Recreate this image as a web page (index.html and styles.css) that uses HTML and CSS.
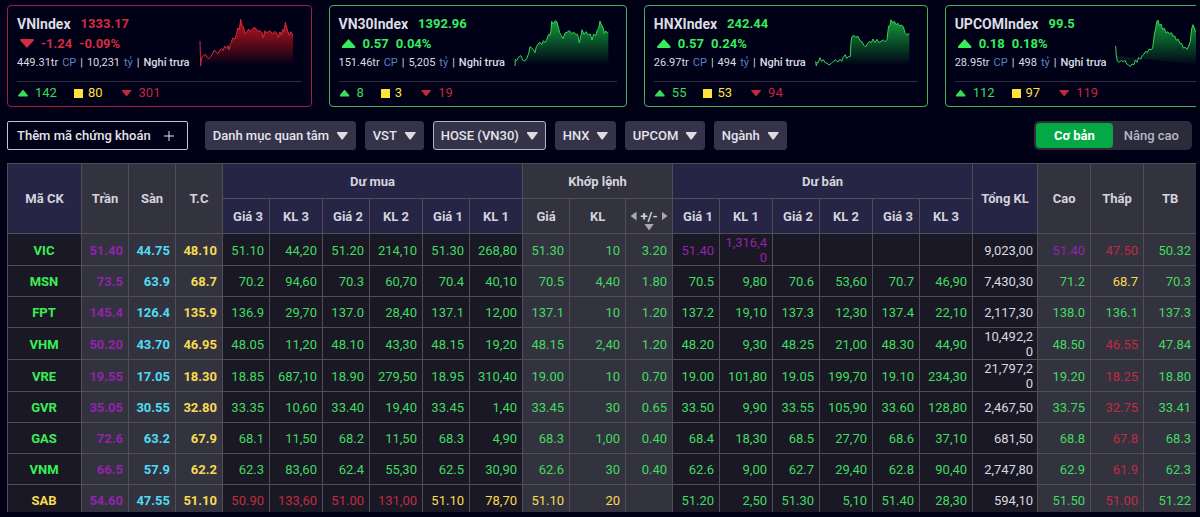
FILE: index.html
```html
<!DOCTYPE html>
<html lang="vi">
<head>
<meta charset="utf-8">
<title>Bảng giá HOSE (VN30)</title>
<link rel="stylesheet" href="styles.css">
</head>
<body>
<main class="board">
<section class="indices">
  <article class="card down">
    <div class="summary">
      <div class="info">
        <h2 class="name">VNIndex <span class="value">1333.17</span></h2>
        <p class="change"><i class="tri"></i><span>-1.24</span><span>-0.09%</span></p>
        <p class="volume"><span>449.31tr</span><span class="unit">CP</span><span>|</span><span>10,231</span><span class="unit">tỷ</span><span>|</span><span class="state">Nghỉ trưa</span></p>
      </div>
      <svg class="chart" viewBox="597 54 285 150">
        <defs><linearGradient id="fallFill" x1="0" y1="0" x2="0" y2="1"><stop offset="0" stop-color="#c4161f"/><stop offset="1" stop-color="#c4161f" stop-opacity="0"/></linearGradient></defs>
        <path fill="url(#fallFill)" d="M601 196L601 172 604 176 608 168 613 163 618 165 621 172 627 176 632 170 638 160 643 150 648 156 654 161 660 150 665 146 669 152 674 138 679 145 684 137 687 150 691 134 694 128 698 114 705 117 710 100 713 84 718 88 722 58 726 76 731 82 735 102 740 96 746 87 751 94 757 88 762 82 768 86 773 94 780 92 786 98 790 114 795 92 800 100 806 93 812 94 818 102 824 94 830 99 835 112 840 96 844 106 848 88 852 94 856 67 860 82 864 96 868 106 873 95 879 108V196Z"/>
        <path class="line" d="M600 123L602 198 604 176 608 168 613 163 618 165 621 172 627 176 632 170 638 160 643 150 648 156 654 161 660 150 665 146 669 152 674 138 679 145 684 137 687 150 691 134 694 128 698 114 705 117 710 100 713 84 718 88 722 58 726 76 731 82 735 102 740 96 746 87 751 94 757 88 762 82 768 86 773 94 780 92 786 98 790 114 795 92 800 100 806 93 812 94 818 102 824 94 830 99 835 112 840 96 844 106 848 88 852 94 856 67 860 82 864 96 868 106 873 95 879 108"/>
      </svg>
    </div>
    <div class="counts"><span class="up"><i class="tri"></i>142</span><span class="flat"><i></i>80</span><span class="down"><i class="tri"></i>301</span></div>
  </article>
  <article class="card up">
    <div class="summary">
      <div class="info">
        <h2 class="name">VN30Index <span class="value">1392.96</span></h2>
        <p class="change"><i class="tri"></i><span>0.57</span><span>0.04%</span></p>
        <p class="volume"><span>151.46tr</span><span class="unit">CP</span><span>|</span><span>5,205</span><span class="unit">tỷ</span><span>|</span><span class="state">Nghỉ trưa</span></p>
      </div>
      <svg class="chart" viewBox="582 54 285 150">
        <defs><linearGradient id="riseFill" x1="0" y1="0" x2="0" y2="1"><stop offset="0" stop-color="#14993a"/><stop offset="1" stop-color="#14993a" stop-opacity="0"/></linearGradient></defs>
        <path fill="url(#riseFill)" d="M586 196V178L590 182 594 174 600 167 604 169 608 180 614 183 620 176 626 160 630 140 635 144 640 149 645 158 649 140 654 132 660 127 665 134 670 122 675 128 681 117 686 103 690 106 693 92 695 64 700 72 705 63 710 64 714 78 719 98 724 106 729 116 735 99 741 97 748 92 755 101 761 97 767 102 773 104 778 128 783 106 786 89 792 103 798 95 804 104 811 102 816 120 821 102 827 108 832 89 836 85 840 63 844 74 849 82 853 100 857 93 862 98 865 96V196Z"/>
        <path class="line" d="M585 198L586 178 590 182 594 174 600 167 604 169 608 180 614 183 620 176 626 160 630 140 635 144 640 149 645 158 649 140 654 132 660 127 665 134 670 122 675 128 681 117 686 103 690 106 693 92 695 64 700 72 705 63 710 64 714 78 719 98 724 106 729 116 735 99 741 97 748 92 755 101 761 97 767 102 773 104 778 128 783 106 786 89 792 103 798 95 804 104 811 102 816 120 821 102 827 108 832 89 836 85 840 63 844 74 849 82 853 100 857 93 862 98 865 96"/>
      </svg>
    </div>
    <div class="counts"><span class="up"><i class="tri"></i>8</span><span class="flat"><i></i>3</span><span class="down"><i class="tri"></i>19</span></div>
  </article>
  <article class="card up">
    <div class="summary">
      <div class="info">
        <h2 class="name">HNXIndex <span class="value">242.44</span></h2>
        <p class="change"><i class="tri"></i><span>0.57</span><span>0.24%</span></p>
        <p class="volume"><span>26.97tr</span><span class="unit">CP</span><span>|</span><span>494</span><span class="unit">tỷ</span><span>|</span><span class="state">Nghỉ trưa</span></p>
      </div>
      <svg class="chart" viewBox="525 54 285 150">
        <path fill="url(#riseFill)" d="M529 198L532 186 535 188 540 173 545 184 550 179 555 188 561 189 567 195 574 190 580 184 587 180 594 186 600 178 605 184 610 172 616 164 620 175 626 170 631 169 633 126 636 110 642 106 647 112 654 109 660 122 666 126 672 136 677 141 683 130 688 124 694 128 699 117 705 128 711 118 717 128 724 123 730 120 736 125 741 119 743 100 746 78 751 75 753 59 758 68 763 64 768 74 774 70 779 78 785 75 790 80 795 98 800 104 808 101V198Z"/>
        <path class="line" d="M527 184L529 198 532 186 535 188 540 173 545 184 550 179 555 188 561 189 567 195 574 190 580 184 587 180 594 186 600 178 605 184 610 172 616 164 620 175 626 170 631 169 633 126 636 110 642 106 647 112 654 109 660 122 666 126 672 136 677 141 683 130 688 124 694 128 699 117 705 128 711 118 717 128 724 123 730 120 736 125 741 119 743 100 746 78 751 75 753 59 758 68 763 64 768 74 774 70 779 78 785 75 790 80 795 98 800 104 808 101"/>
      </svg>
    </div>
    <div class="counts"><span class="up"><i class="tri"></i>55</span><span class="flat"><i></i>53</span><span class="down"><i class="tri"></i>94</span></div>
  </article>
  <article class="card up">
    <div class="summary">
      <div class="info">
        <h2 class="name">UPCOMIndex <span class="value">99.5</span></h2>
        <p class="change"><i class="tri"></i><span>0.18</span><span>0.18%</span></p>
        <p class="volume"><span>28.95tr</span><span class="unit">CP</span><span>|</span><span>498</span><span class="unit">tỷ</span><span>|</span><span class="state">Nghỉ trưa</span></p>
      </div>
      <svg class="chart" viewBox="560 54 285 150">
        <path fill="url(#riseFill)" d="M563 168L567 183 573 187 579 181 585 186 590 181 595 192 600 194 605 200 611 192 617 194 621 180 626 187 631 172 637 178 641 168 647 162 652 154 657 158 662 148 668 149 673 145 676 120 679 98 682 86 685 66 689 60 693 76 698 72 703 88 708 85 713 99 718 95 723 102 729 98 734 108 740 109 744 121 750 118 755 131 760 130 765 144 771 142 776 148 781 138 786 124 790 86 794 74 800 90 806 102 812 96 820 108 828 104 842 110V198Z"/>
        <path class="line" d="M562 138L564 168 567 183 573 187 579 181 585 186 590 181 595 192 600 194 605 200 611 192 617 194 621 180 626 187 631 172 637 178 641 168 647 162 652 154 657 158 662 148 668 149 673 145 676 120 679 98 682 86 685 66 689 60 693 76 698 72 703 88 708 85 713 99 718 95 723 102 729 98 734 108 740 109 744 121 750 118 755 131 760 130 765 144 771 142 776 148 781 138 786 124 790 86 794 74 800 90 806 102 812 96 820 108 828 104 842 110"/>
      </svg>
    </div>
    <div class="counts"><span class="up"><i class="tri"></i>112</span><span class="flat"><i></i>97</span><span class="down"><i class="tri"></i>119</span></div>
  </article>
</section>

<nav class="toolbar">
  <button class="add" type="button">Thêm mã chứng khoán
    <svg viewBox="0 0 10 10" width="10" height="10"><path d="M5 0V10M0 5H10" stroke="#e4e4ea" fill="none"/></svg>
  </button>
  <label class="drop"><select aria-label="Danh mục"><option>Danh mục quan tâm</option></select></label>
  <label class="drop"><select aria-label="VST"><option>VST</option></select></label>
  <label class="drop selected"><select aria-label="HOSE"><option>HOSE (VN30)</option></select></label>
  <label class="drop"><select aria-label="HNX"><option>HNX</option></select></label>
  <label class="drop"><select aria-label="UPCOM"><option>UPCOM</option></select></label>
  <label class="drop"><select aria-label="Ngành"><option>Ngành</option></select></label>
  <div class="mode">
    <button type="button" class="active" aria-pressed="true">Cơ bản</button>
    <button type="button" aria-pressed="false">Nâng cao</button>
  </div>
</nav>

<section class="quotes">
<table>
  <colgroup>
    <col class="code"><col class="price alt"><col class="price alt"><col class="price alt">
    <col class="price"><col class="lot"><col class="price"><col class="lot"><col class="price"><col class="lot">
    <col class="price alt"><col class="match alt"><col class="price alt">
    <col class="price"><col class="lot"><col class="price"><col class="lot"><col class="price"><col class="lot">
    <col class="total"><col class="lot alt"><col class="lot alt"><col class="lot alt">
  </colgroup>
  <thead>
    <tr>
      <th rowspan="2">Mã CK</th><th rowspan="2" class="alt">Trần</th><th rowspan="2" class="alt">Sàn</th><th rowspan="2" class="alt">T.C</th>
      <th colspan="6">Dư mua</th><th colspan="3" class="alt">Khớp lệnh</th><th colspan="6">Dư bán</th>
      <th rowspan="2">Tổng KL</th><th rowspan="2" class="alt">Cao</th><th rowspan="2" class="alt">Thấp</th><th rowspan="2" class="alt">TB</th>
    </tr>
    <tr>
      <th class="lead">Giá 3</th><th>KL 3</th><th class="lead">Giá 2</th><th>KL 2</th><th class="lead">Giá 1</th><th>KL 1</th>
      <th class="alt">Giá</th><th class="alt">KL</th><th class="alt"><span class="pager"><i class="prev"></i>+/-<i class="next"></i><i class="more"></i></span></th>
      <th class="lead">Giá 1</th><th>KL 1</th><th class="lead">Giá 2</th><th>KL 2</th><th class="lead">Giá 3</th><th>KL 3</th>
    </tr>
  </thead>
  <tbody>
    <tr><td>VIC</td><td>51.40</td><td>44.75</td><td>48.10</td><td>51.10</td><td>44,20</td><td>51.20</td><td>214,10</td><td>51.30</td><td>268,80</td><td>51.30</td><td>10</td><td>3.20</td><td class="ceil">51.40</td><td class="ceil">1,316,40</td><td></td><td></td><td></td><td></td><td>9,023,00</td><td class="ceil">51.40</td><td class="loss">47.50</td><td>50.32</td></tr>
    <tr><td>MSN</td><td>73.5</td><td>63.9</td><td>68.7</td><td>70.2</td><td>94,60</td><td>70.3</td><td>60,70</td><td>70.4</td><td>40,10</td><td>70.5</td><td>4,40</td><td>1.80</td><td>70.5</td><td>9,80</td><td>70.6</td><td>53,60</td><td>70.7</td><td>46,90</td><td>7,430,30</td><td>71.2</td><td class="ref">68.7</td><td>70.3</td></tr>
    <tr><td>FPT</td><td>145.4</td><td>126.4</td><td>135.9</td><td>136.9</td><td>29,70</td><td>137.0</td><td>28,40</td><td>137.1</td><td>12,00</td><td>137.1</td><td>10</td><td>1.20</td><td>137.2</td><td>19,10</td><td>137.3</td><td>12,30</td><td>137.4</td><td>22,10</td><td>2,117,30</td><td>138.0</td><td>136.1</td><td>137.3</td></tr>
    <tr><td>VHM</td><td>50.20</td><td>43.70</td><td>46.95</td><td>48.05</td><td>11,20</td><td>48.10</td><td>43,30</td><td>48.15</td><td>19,20</td><td>48.15</td><td>2,40</td><td>1.20</td><td>48.20</td><td>9,30</td><td>48.25</td><td>21,00</td><td>48.30</td><td>44,90</td><td>10,492,20</td><td>48.50</td><td class="loss">46.55</td><td>47.84</td></tr>
    <tr><td>VRE</td><td>19.55</td><td>17.05</td><td>18.30</td><td>18.85</td><td>687,10</td><td>18.90</td><td>279,50</td><td>18.95</td><td>310,40</td><td>19.00</td><td>10</td><td>0.70</td><td>19.00</td><td>101,80</td><td>19.05</td><td>199,70</td><td>19.10</td><td>234,30</td><td>21,797,20</td><td>19.20</td><td class="loss">18.25</td><td>18.80</td></tr>
    <tr><td>GVR</td><td>35.05</td><td>30.55</td><td>32.80</td><td>33.35</td><td>10,60</td><td>33.40</td><td>19,40</td><td>33.45</td><td>1,40</td><td>33.45</td><td>30</td><td>0.65</td><td>33.50</td><td>9,90</td><td>33.55</td><td>105,90</td><td>33.60</td><td>128,80</td><td>2,467,50</td><td>33.75</td><td class="loss">32.75</td><td>33.41</td></tr>
    <tr><td>GAS</td><td>72.6</td><td>63.2</td><td>67.9</td><td>68.1</td><td>11,50</td><td>68.2</td><td>11,50</td><td>68.3</td><td>4,90</td><td>68.3</td><td>1,00</td><td>0.40</td><td>68.4</td><td>18,30</td><td>68.5</td><td>27,70</td><td>68.6</td><td>37,10</td><td>681,50</td><td>68.8</td><td class="loss">67.8</td><td>68.3</td></tr>
    <tr><td>VNM</td><td>66.5</td><td>57.9</td><td>62.2</td><td>62.3</td><td>83,60</td><td>62.4</td><td>55,30</td><td>62.5</td><td>30,90</td><td>62.6</td><td>30</td><td>0.40</td><td>62.6</td><td>9,00</td><td>62.7</td><td>29,40</td><td>62.8</td><td>90,40</td><td>2,747,80</td><td>62.9</td><td class="loss">61.9</td><td>62.3</td></tr>
    <tr><td class="ref">SAB</td><td>54.60</td><td>47.55</td><td>51.10</td><td class="loss">50.90</td><td class="loss">133,60</td><td class="loss">51.00</td><td class="loss">131,00</td><td class="ref">51.10</td><td class="ref">78,70</td><td class="ref">51.10</td><td class="ref">20</td><td></td><td>51.20</td><td>2,50</td><td>51.30</td><td>5,10</td><td>51.40</td><td>28,30</td><td>594,10</td><td>51.50</td><td class="loss">51.00</td><td>51.22</td></tr>
  </tbody>
</table>
</section>
</main>
</body>
</html>
```
FILE: styles.css
```css
* { box-sizing: border-box; }

body {
  margin: 0;
  background: #000016;
  color: #dcdce2;
  font-family: Roboto, "Noto Sans", sans-serif;
  font-size: 13px;
}

.board {
  display: flex;
  flex-direction: column;
  height: 100vh;
  padding: 5px 4px 5px 7px;
}

/* Index cards */
.indices {
  display: flex;
  gap: 17px;
  overflow: hidden;
  flex: none;
}

.card {
  flex: none;
  padding: 8px 9px 2px;
  border: 1px solid;
  border-radius: 4px;
}
.card.down { border-color: #a02040; }
.card.up { border-color: #48b05c; }

.summary {
  display: flex;
  gap: 9px;
  padding: 0 8px 9px 0;
  border-bottom: 1px solid #2e2d44;
}

.name, .change, .volume {
  display: flex;
  align-items: center;
  margin: 0;
  white-space: nowrap;
}
.name { gap: 10px; font-size: 14px; font-weight: 700; line-height: 20px; }
.value { font-size: 13px; }
.change { gap: 7px; padding-left: 3px; font-size: 13px; font-weight: 700; line-height: 19px; }
.volume { gap: 4px; font-size: 11px; line-height: 19px; }
.unit { color: #5a82c8; }
.state { font-weight: 500; }

.card.up .value, .card.up .change { color: #38ec5c; }
.card.down .value, .card.down .change { color: #d42c40; }

.chart { flex: none; width: 95px; height: 50px; margin-top: 4px; }
.line { fill: none; stroke: #34d458; stroke-width: 3; stroke-linejoin: round; }
.card.down .line { stroke: #d02c3c; }

.tri { display: inline-block; background: currentColor; clip-path: polygon(50% 0, 100% 85%, 95% 100%, 5% 100%, 0 85%); }
.down > .tri, .card.down .change .tri { clip-path: polygon(5% 0, 95% 0, 100% 15%, 50% 100%, 0 15%); }
.change .tri { width: 14px; height: 9px; }

.counts { display: flex; gap: 17px; padding-left: 1px; font-size: 13px; line-height: 22px; }
.counts span { display: flex; align-items: center; gap: 7px; }
.counts .tri { width: 10px; height: 7px; }
.counts .up { color: #38dc58; }
.counts .flat { gap: 5px; margin-right: 2px; color: #ffe23c; }
.counts .flat i { width: 9px; height: 9px; background: currentColor; }
.counts .down { color: #c02840; }

/* Toolbar */
.toolbar {
  display: flex;
  flex: none;
  gap: 9px;
  margin: 14px 4px 13px 0;
}
.toolbar button, .toolbar select {
  color: #e4e4ea;
  font: 500 13px/26px Roboto, "Noto Sans", sans-serif;
  cursor: pointer;
}
.add {
  display: flex;
  align-items: center;
  gap: 13px;
  height: 29px;
  margin-right: 8px;
  padding: 0 13px 0 9px;
  border: 1px solid #c4c4d0;
  border-radius: 2px;
  background: none;
}
.drop { display: grid; align-items: center; }
.drop select, .drop::after { grid-area: 1 / 1; }
.drop select {
  height: 29px;
  padding: 0 25px 0 7px;
  border: 1px solid #35334a;
  border-radius: 3px;
  background: #35334a;
  appearance: none;
}
.drop.selected select { border-color: #b4b4c4; }
.drop::after {
  content: "";
  justify-self: end;
  width: 11px;
  height: 8px;
  margin-right: 8px;
  background: #dcdce2;
  clip-path: polygon(0 0, 100% 0, 100% 15%, 55% 100%, 45% 100%, 0 15%);
  pointer-events: none;
}
.mode {
  display: flex;
  margin-left: auto;
  padding: 2px;
  border-radius: 5px;
  background: #2c2b3c;
}
.mode button { padding: 0 11px; border: 0; border-radius: 4px; background: none; color: #b8b8c4; line-height: 25px; }
.mode .active { padding: 0 18px; background: #04a844; color: #fff; font-weight: 700; }

/* Quote table */
.quotes { flex: 1; min-height: 0; overflow: hidden; }

table { width: 100%; border-collapse: collapse; table-layout: fixed; }
col { background: #1a1824; }
col.alt { background: #33323f; }
.code { width: 74px; }
.price { width: 47px; }
.lot { width: 53px; }
.match { width: 56px; }
.total { width: 65px; }

th, td { border: 1px solid #514e56; }
th {
  height: 35px;
  padding: 0;
  background: #262545;
  color: #d4d4dc;
  font-size: 13px;
  font-weight: 700;
  white-space: nowrap;
}
th.alt { background: #33323f; }
.lead { padding-left: 4px; }

td {
  height: 31px;
  padding: 1px 5px 0 4px;
  color: #40dc60;
  line-height: 15px;
  text-align: right;
  word-break: break-all;
}
td:nth-child(-n+4) { font-weight: 700; }
td:first-child { color: #38f054; text-align: center; }
td:nth-child(2), td.ceil { color: #9224aa; }
td:nth-child(3) { color: #50dcf4; }
td:nth-child(4), td.ref, td.ref:first-child { color: #f8dc50; }
td:nth-child(20) { padding-right: 4px; padding-left: 5px; color: #d8d8e0; }
td.loss { color: #c02c40; }

.pager {
  position: relative;
  display: flex;
  align-items: center;
  justify-content: center;
  gap: 4px;
}
.pager i { width: 6px; height: 9px; background: #a8a8b0; }
.prev { clip-path: polygon(100% 0, 100% 100%, 0 50%); }
.next { clip-path: polygon(0 0, 100% 50%, 0 100%); }
.pager .more {
  position: absolute;
  top: 15px;
  width: 10px;
  height: 7px;
  clip-path: polygon(0 0, 100% 0, 50% 100%);
}
```
